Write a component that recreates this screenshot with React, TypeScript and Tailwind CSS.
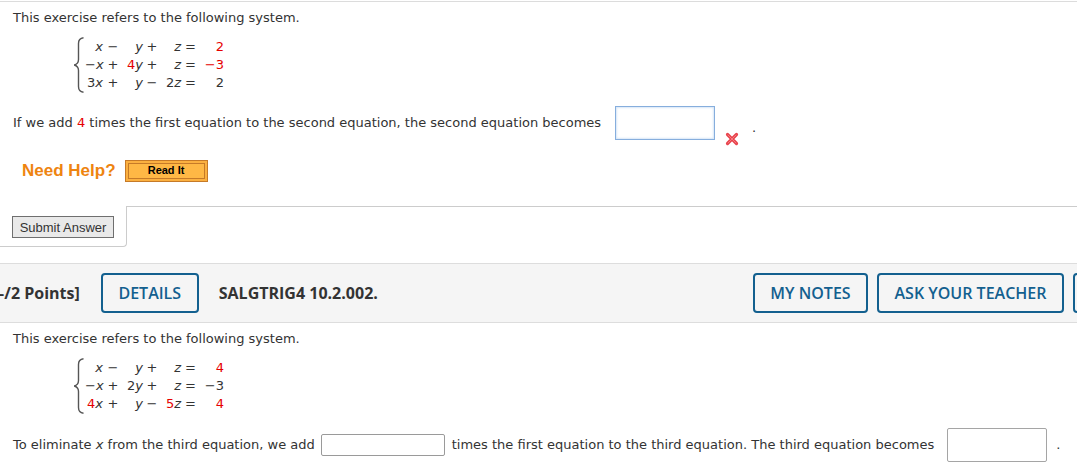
import React from "react";

const body = { fontFamily: '"DejaVu Sans", Verdana, sans-serif' };
const arial = { fontFamily: '"Liberation Sans", Arial, sans-serif' };
const open = { fontFamily: '"Open Sans", sans-serif' };

function Brace() {
  return (
    <svg width="12" height="56" viewBox="0 0 12 56" className="shrink-0 -my-[1px]">
      <path
        d="M10.5 0.8 C7 1.2 5.5 3 5.5 6.5 L5.5 22.5 C5.5 25.5 4 27.3 1.2 28 C4 28.7 5.5 30.5 5.5 33.5 L5.5 49.5 C5.5 53 7 54.8 10.5 55.2"
        fill="none"
        stroke="#555"
        strokeWidth="1.4"
      />
    </svg>
  );
}

const R = ({ children }: { children: React.ReactNode }) => (
  <span className="text-[#e60000]">{children}</span>
);
const I = ({ children }: { children: React.ReactNode }) => (
  <i className="italic">{children}</i>
);

type Row = [React.ReactNode, string, React.ReactNode, string, React.ReactNode, React.ReactNode];

function System({ rows }: { rows: Row[] }) {
  return (
    <div className="flex items-center ml-[73px] mt-[12px] h-[54px]">
      <Brace />
      <div className="grid grid-cols-[18px_20px_20px_18px_20px_19px_24px] leading-[17.7px] text-[13px] text-[#333]">
        {rows.map((r, i) => (
          <React.Fragment key={i}>
            <span className="text-right whitespace-nowrap">{r[0]}</span>
            <span className="text-center">{r[1]}</span>
            <span className="text-right whitespace-nowrap">{r[2]}</span>
            <span className="text-center">{r[3]}</span>
            <span className="text-right whitespace-nowrap">{r[4]}</span>
            <span className="text-center">=</span>
            <span className="text-right whitespace-nowrap">{r[5]}</span>
          </React.Fragment>
        ))}
      </div>
    </div>
  );
}

function RedX() {
  return (
    <svg width="14" height="14" viewBox="0 0 14 14">
      <path d="M2.5 2.5 L11.5 11.5 M11.5 2.5 L2.5 11.5" stroke="#e8434c" strokeWidth="3.2" strokeLinecap="round" />
      <path d="M3 3 L11 11 M11 3 L3 11" stroke="#f57a80" strokeWidth="1" strokeLinecap="round" />
    </svg>
  );
}

export default function App() {
  return (
    <div className="w-[1077px] h-[462px] bg-white overflow-hidden text-[13px] text-[#333]" style={body}>
      <div className="mt-[1px] border-t border-[#dcdcdc]" />
      {/* Section 1 */}
      <div className="pl-[13px] pt-[8px] leading-[16px]">This exercise refers to the following system.</div>
      <System
        rows={[
          [<I>x</I>, "−", <I>y</I>, "+", <I>z</I>, <R>2</R>],
          [<>−<I>x</I></>, "+", <><R>4</R><I>y</I></>, "+", <I>z</I>, <R>−3</R>],
          [<>3<I>x</I></>, "+", <I>y</I>, "−", <>2<I>z</I></>, "2"],
        ]}
      />
      <div className="flex items-start pl-[13px] mt-[14px] h-[34px]">
        <span className="self-center whitespace-nowrap">
          If we add <R>4</R> times the first equation to the second equation, the second equation becomes
        </span>
        <div className="ml-[14px] w-[100px] h-[34px] border border-[#86aedd] shadow-[inset_0_0_2px_1px_#d7e6f7] bg-white shrink-0" />
        <div className="ml-[10px] mt-[26px]">
          <RedX />
        </div>
        <span className="ml-[13px] mt-[12px]">.</span>
      </div>
      <div className="flex items-center pl-[22px] mt-[20px] h-[21px]">
        <span className="text-[17px] font-bold text-[#ee8410] leading-[20px]" style={arial}>
          Need Help?
        </span>
        <div className="ml-[9px] w-[83px] h-[22px] border border-[#c67a28] bg-[#fbb040] p-[2px] flex">
          <div
            className="flex-1 border border-[#c67a28] bg-[#ffb845] flex items-center justify-center text-[11px] font-bold text-black leading-none"
            style={arial}
          >
            Read It
          </div>
        </div>
      </div>
      <div className="flex mt-[25px]">
        <div className="w-[127px] h-[41px] border-r border-b border-[#cccccc] rounded-br-[4px] pl-[12px] pt-[10px] shrink-0">
          <button
            className="w-[102px] h-[22px] bg-[#e9e9e9] border border-[#6f6f6f] text-[13px] text-[#333] leading-none"
            style={arial}
          >
            Submit Answer
          </button>
        </div>
        <div className="flex-1 border-t border-[#cccccc]" />
      </div>
      {/* Header bar */}
      <div className="mt-[16px] border-t border-b border-[#dddddd] bg-[#f5f5f5] overflow-hidden" style={open}>
        <div className="w-[1213px] flex items-center py-[9px]">
          <span className="ml-[-9px] text-[16px] font-bold text-[#333] whitespace-nowrap">[–/2 Points]</span>
          <button className="ml-[21px] w-[98px] h-[40px] border-2 border-[#13608f] rounded-[4px] text-[16px] font-semibold text-[#13608f] bg-transparent">
            DETAILS
          </button>
          <span className="ml-[20px] text-[16px] font-bold text-[#333] whitespace-nowrap">SALGTRIG4 10.2.002.</span>
          <div className="flex-1" />
          <button className="w-[115px] h-[40px] border-2 border-[#13608f] rounded-[4px] text-[16px] font-semibold text-[#13608f] whitespace-nowrap">
            MY NOTES
          </button>
          <button className="ml-[9px] w-[187px] h-[40px] border-2 border-[#13608f] rounded-[4px] text-[16px] font-semibold text-[#13608f] whitespace-nowrap">
            ASK YOUR TEACHER
          </button>
          <button className="ml-[9px] w-[140px] h-[40px] border-2 border-[#13608f] rounded-[4px] text-[16px] font-semibold text-[#13608f] whitespace-nowrap">
            PRACTICE
          </button>
        </div>
      </div>
      {/* Section 2 */}
      <div className="pl-[13px] pt-[8px] leading-[16px]">This exercise refers to the following system.</div>
      <System
        rows={[
          [<I>x</I>, "−", <I>y</I>, "+", <I>z</I>, <R>4</R>],
          [<>−<I>x</I></>, "+", <>2<I>y</I></>, "+", <I>z</I>, "−3"],
          [<><R>4</R><I>x</I></>, "+", <I>y</I>, "−", <><R>5</R><I>z</I></>, <R>4</R>],
        ]}
      />
      <div className="flex items-center pl-[13px] mt-[15px] h-[34px] whitespace-nowrap">
        <span>
          To eliminate <I>x</I> from the third equation, we add
        </span>
        <div className="ml-[6px] w-[124px] h-[22px] border border-[#9a9a9a] rounded-[2px] bg-white shrink-0" />
        <span className="ml-[7px]">times the first equation to the third equation. The third equation becomes</span>
        <div className="ml-[13px] w-[100px] h-[34px] border border-[#a5a5a5] rounded-[2px] bg-white shrink-0" />
        <span className="ml-[9px]">.</span>
      </div>
    </div>
  );
}
